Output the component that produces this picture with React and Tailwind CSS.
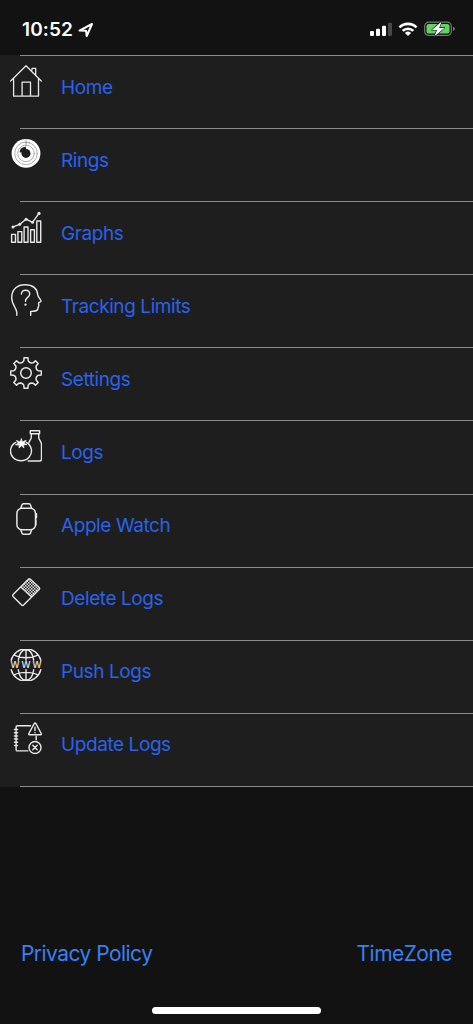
import React from "react";

const toothPoints = [[-3.4, -10.8], [-2.2, -12.2], [-1.9, -15.3], [1.9, -15.3], [2.2, -12.2], [3.4, -10.8]];

const gearPoints = [0, 45, 90, 135, 180, 225, 270, 315]
  .flatMap((deg) => {
    const a = (deg * Math.PI) / 180;
    return toothPoints.map(([x, y]) => [
      16 + x * Math.cos(a) - y * Math.sin(a),
      16 + x * Math.sin(a) + y * Math.cos(a),
    ]);
  })
  .map(([x, y]) => `${x.toFixed(2)},${y.toFixed(2)}`)
  .join(" ");

function Icon({ children, width = 1.4 }) {
  return (
    <svg
      viewBox="0 0 32 32"
      className="h-8 w-8 shrink-0"
      fill="none"
      stroke="#e8e8e8"
      strokeWidth={width}
      strokeLinejoin="round"
      strokeLinecap="round"
    >
      {children}
    </svg>
  );
}

const HomeIcon = () => (
  <Icon width={1.3}>
    <path d="M.7 16 16 .8 31.3 16M3.6 13.4v17.7h24.9V13.4M12.1 31V17.2h8.4V31M22 5V3.4h3.7v6.4" />
  </Icon>
);

const RingsIcon = () => (
  <Icon>
    <circle cx="16" cy="15.4" r="14.4" fill="#fff" stroke="none" />
    <g stroke="#8a8a8a" strokeWidth=".7">
      <circle cx="16" cy="15.4" r="11.3" />
      <circle cx="16" cy="15.4" r="8.3" />
      <path d="M16 1.5v7M18 4.4l1.4.7M15.2 4l1.4 1.5" />
    </g>
    <circle cx="16" cy="15.4" r="4.5" fill="#1e1e1e" stroke="none" />
    <path d="M9.6 14.2a6.3 6.3 0 0 1 6-5.4l1 3.5-3.7 2.4z" fill="#1e1e1e" stroke="none" />
  </Icon>
);

const GraphsIcon = () => (
  <Icon>
    <path d="M1.6 23.4h3.9v7.8H1.6zM7.9 20.6h3.9v10.6H7.9zM14.1 16h3.9v15.2h-3.9zM20.6 18.7h3.8v12.5h-3.8zM26.8 10h3.9v21.2h-3.9z" />
    <path d="m3 15.9 6.7-2.6 6.4-5.1 6.4 3.1L29 2.4" />
    <g fill="#e8e8e8" stroke="none">
      <circle cx="3" cy="15.9" r="1.5" />
      <circle cx="9.7" cy="13.3" r="1.5" />
      <circle cx="16.1" cy="8.2" r="1.5" />
      <circle cx="22.5" cy="11.3" r="1.5" />
      <circle cx="29" cy="2.4" r="1.6" />
    </g>
  </Icon>
);

const LimitsIcon = () => (
  <Icon>
    <path d="M6.8 31.2v-2.8c0-4-5.1-7.7-5.1-14.6C1.7 5.2 7.6.8 14.8.8c7.4 0 12.4 3.4 13 10.2.1 2 3.3 5.1 3.3 6.1 0 1-1.5 1.2-2.4 1.5-.3 1.4.3 2.3-.1 3.6-.4 1.2-.7 1.4-.8 2.7-.1 2.2-3.8 2.5-7.1 2.5v3.8" />
    <path d="M11.4 10.1c0-2.5 1.6-3.9 4.1-3.9s4.2 1.5 4.2 3.8c0 3.5-4.2 3.3-4.2 7v.3" />
    <circle cx="15.5" cy="20.6" r=".5" fill="#e8e8e8" />
  </Icon>
);

const SettingsIcon = () => (
  <Icon width={1.5}>
    <polygon points={gearPoints} />
    <circle cx="16" cy="16" r="5.3" />
  </Icon>
);

const LogsIcon = () => (
  <Icon>
    <path d="M16.2 12.3a10.5 9.9 0 1 1-10.4 0" />
    <path d="M20.3.8h9.3v2.9h-9.3zM21.3 3.9v3.7c0 1.5-2 3-2.6 5.5M28.7 3.9v3.5c0 2.2 2.8 4 2.8 7.1v14.3c0 1.4-.6 2.2-2 2.2H18.2" />
    <path
      d="m11.5 8.9.8 3.1 3.8-1.7-2.2 3.1 3.1 1.1-3.7.5.6 2.9-2.5-2.2-2.3 2.4.1-3-3.7-.3 2.9-1.6-1.9-2.7 3.5 1.4z"
      fill="#fff"
      strokeWidth=".9"
    />
  </Icon>
);

const WatchIcon = () => (
  <Icon width={1.5}>
    <rect x="6.9" y="5.3" width="18.6" height="21.4" rx="5" />
    <path d="M10.8 5.2 11.9 2c.3-.8.7-1.2 1.5-1.2H19c.8 0 1.3.4 1.5 1.2l1.1 3.2M10.8 26.8l1.1 3.2c.3.8.7 1.2 1.5 1.2H19c.8 0 1.3-.4 1.5-1.2l1.1-3.2" />
    <path d="M26.2 11v3.4" strokeWidth="2" />
    <path d="M26.1 17v5" strokeWidth="1" />
  </Icon>
);

const DeleteIcon = () => (
  <Icon>
    <defs>
      <pattern id="dots" width="3" height="3" patternUnits="userSpaceOnUse">
        <path d="M0 0h1.5v1.5H0zM1.5 1.5H3V3H1.5z" fill="#e0e0e0" stroke="none" />
      </pattern>
    </defs>
    <path d="m11 11 8.3-8.2 10.2 9.4-8.2 8.6z" fill="url(#dots)" stroke="none" />
    <path d="M18.4 3.2q1-1 2 0l8.8 8.2q1 1 0 2L13.6 29q-1 1-2 0L3.1 20.6q-1-1 0-2zM10.8 11l10.8 10" />
  </Icon>
);

const PushIcon = () => (
  <Icon>
    <path d="M1.2 11.2a15.3 15.3 0 0 1 29.6 0M1.2 20.8a15.3 15.3 0 0 0 29.6 0M16 .7v10.5M16 20.8v10.5M8.3 11.2C9.3 5 12.2.7 16 .7s6.7 4.3 7.7 10.5M8.3 20.8c1 6.2 3.9 10.5 7.7 10.5s6.7-4.3 7.7-10.5M4.3 6.2c6 3.3 17.4 3.3 23.4 0M4.3 25.8c6-3.3 17.4-3.3 23.4 0" />
    <g className="font-['Inter'] text-[9px] font-medium" fill="#e8e8e8" stroke="none" textAnchor="middle">
      <text x="5" y="19.3">W</text>
      <text x="16" y="19.3">W</text>
      <text x="27" y="19.3">W</text>
    </g>
  </Icon>
);

const UpdateIcon = () => (
  <Icon>
    <path d="M20.6 3.8H7.3q-1.2 0-1.2 1.2v22.7q0 1.2 1.2 1.2h10.5M26.2 14.3v3.5" />
    <path d="M4.5 7.5h3M4.5 10.7h3M4.5 13.9h3M4.5 17.1h3M4.5 20.3h3M4.5 23.5h3" strokeWidth="1.5" />
    <path d="M24.2 1.7q.9-1.4 1.7 0L31.2 11.5q.6 1.3-.6 1.3H19.5q-1.2 0-.6-1.3zM25 5.3v3.2M25 10.6v.1" />
    <circle cx="25" cy="25.5" r="6" />
    <path d="m22.8 23.3 4.4 4.4M27.2 23.3l-4.4 4.4" />
  </Icon>
);

const menuItems = [
  { label: "Home", icon: HomeIcon },
  { label: "Rings", icon: RingsIcon },
  { label: "Graphs", icon: GraphsIcon },
  { label: "Tracking Limits", icon: LimitsIcon },
  { label: "Settings", icon: SettingsIcon },
  { label: "Logs", icon: LogsIcon },
  { label: "Apple Watch", icon: WatchIcon },
  { label: "Delete Logs", icon: DeleteIcon },
  { label: "Push Logs", icon: PushIcon },
  { label: "Update Logs", icon: UpdateIcon },
];

function StatusBar() {
  return (
    <header className="flex h-[55px] items-start justify-between pt-[19px] pr-[18px] pl-[22px] text-white">
      <div className="flex items-center gap-[5px]">
        <span className="text-[19px] leading-[22px] font-semibold tracking-[0.1px]">10:52</span>
        <svg viewBox="0 0 16 16" className="h-4 w-4" fill="none" stroke="#fff" strokeWidth="2" strokeLinejoin="round">
          <path d="M1.5 8.6 14 2 8.7 14.2 8.1 8.7z" />
        </svg>
      </div>
      <div className="flex items-center gap-[6px] pt-[2px]">
        <svg viewBox="0 0 22 16" className="h-4 w-[22px]" fill="#fff">
          <rect x="0" y="10" width="4" height="5" rx="1.1" />
          <rect x="6" y="7.7" width="4" height="7.3" rx="1.1" />
          <rect x="12" y="4.7" width="4" height="10.3" rx="1.1" />
          <rect x="18" y="1.7" width="4" height="13.3" rx="1.1" fill="#474747" />
        </svg>
        <svg viewBox="0 0 20 16" className="h-4 w-5" fill="none" stroke="#fff" strokeWidth="2.6">
          <path d="M1.4 6.4a12.3 12.3 0 0 1 17.2 0M4.7 9.9a7.6 7.6 0 0 1 10.6 0" />
          <path d="M6.9 12a4.5 4.5 0 0 1 6.2 0L10 15z" fill="#fff" stroke="none" />
        </svg>
        <svg viewBox="0 0 31 16" className="h-4 w-[31px]">
          <rect x=".7" y="1.2" width="26.6" height="13.2" rx="4" fill="none" stroke="#777" strokeWidth="1.2" />
          <rect x="2.5" y="3" width="23" height="9.6" rx="2.2" fill="#62d267" />
          <path d="M29 5.8q1.8.6 1.8 2.1T29 10z" fill="#777" />
          <path
            d="M17.6.4 8 9h5.1L10.2 15.6 20.4 6.9h-5.2z"
            fill="#fff"
            stroke="#121212"
            strokeWidth="1.2"
            paintOrder="stroke"
            strokeLinejoin="round"
          />
        </svg>
      </div>
    </header>
  );
}

function MenuRow({ item }) {
  const ItemIcon = item.icon;
  return (
    <li className="h-[73.1px]">
      <div className="ml-5 h-px bg-[#8c8c8c]" />
      <a href="#" className="flex pt-[8.6px] pl-[10px]">
        <ItemIcon />
        <span className="mt-[11px] ml-[19px] text-[19px] leading-6 tracking-[-0.42px] text-[#2962ec]">{item.label}</span>
      </a>
    </li>
  );
}

export default function App() {
  return (
    <div className="flex h-[1024px] w-[473px] flex-col overflow-hidden bg-[#121212] font-['Inter',sans-serif]">
      <StatusBar />
      <ul className="bg-[#1e1e1e]">
        {menuItems.map((item) => (
          <MenuRow key={item.label} item={item} />
        ))}
        <li className="ml-5 h-px bg-[#8c8c8c]" />
      </ul>
      <footer className="mt-auto">
        <nav className="flex justify-between px-[21px] text-[21px] leading-6 tracking-[-0.54px] text-[#3880f4]">
          <a href="#">Privacy Policy</a>
          <a href="#">TimeZone</a>
        </nav>
        <div className="mx-auto mt-[41px] mb-[10px] h-[7px] w-[169px] rounded-full bg-white" />
      </footer>
    </div>
  );
}
